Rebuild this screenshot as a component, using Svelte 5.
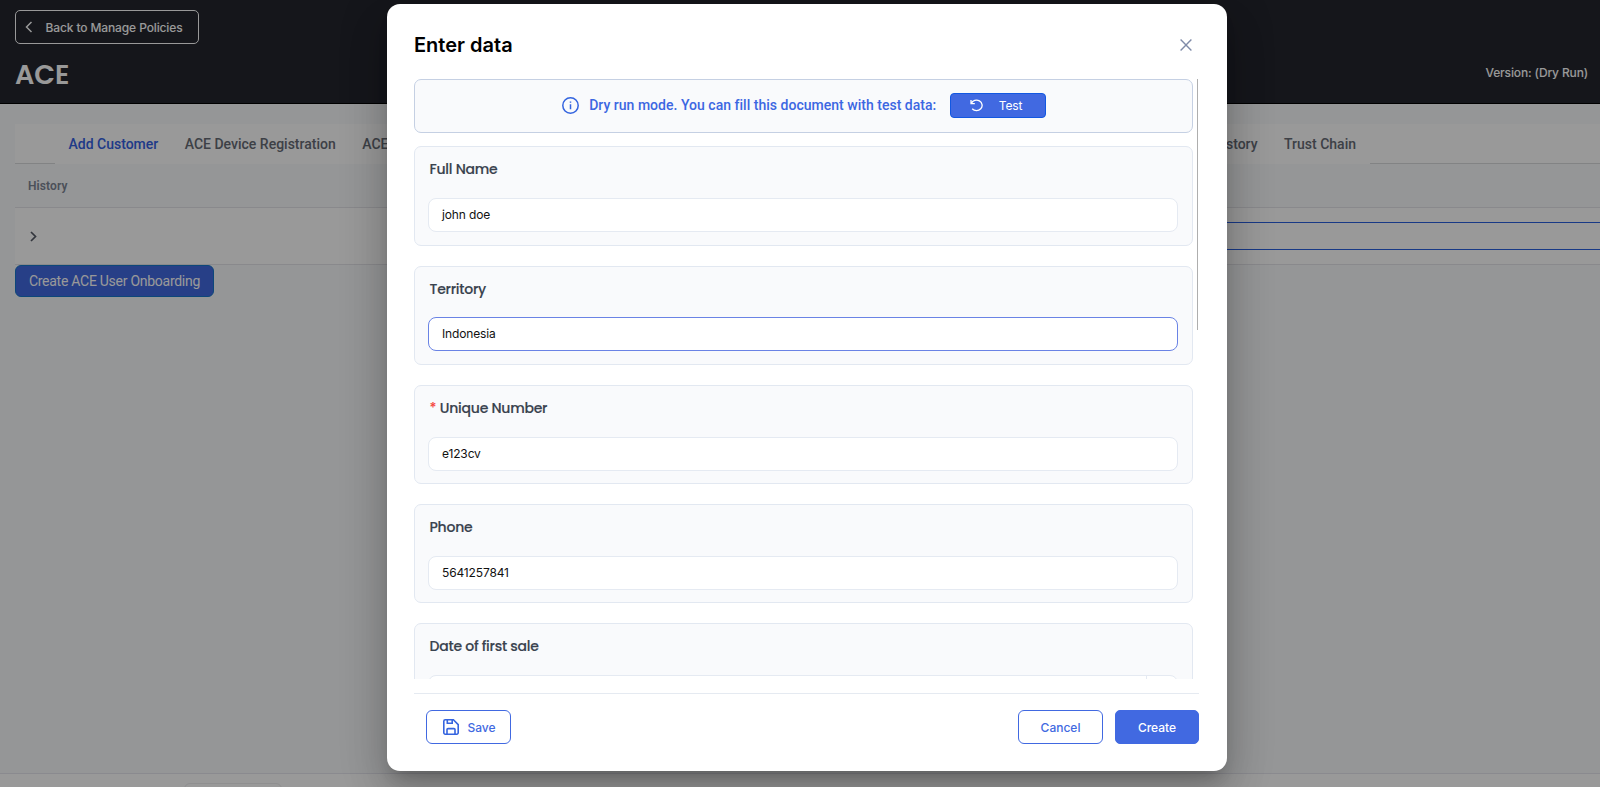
<script>
  const fields = [
    { label: 'Full Name', value: 'john doe' },
    { label: 'Territory', value: 'Indonesia', focused: true },
    { label: 'Unique Number', value: 'e123cv', required: true },
    { label: 'Phone', value: '5641257841' },
    { label: 'Date of first sale', value: '', picker: true }
  ];
</script>

<div class="screen">
  <header class="top">
    <button class="back">
      <svg width="8" height="12" viewBox="0 0 8 12"><path d="M6.5 1 1.5 6l5 5" /></svg>
      <span>Back to Manage Policies</span>
    </button>
    <div class="heading">
      <h1>ACE</h1>
      <span class="version">Version: (Dry Run)</span>
    </div>
  </header>

  <main>
    <nav class="tabs">
      <div class="edge start"></div>
      <a class="active" href="#add">Add Customer</a>
      <a href="#device">ACE Device Registration</a>
      <a href="#user">ACE</a>
      <a class="push" href="#history">History</a>
      <a href="#trust">Trust Chain</a>
      <div class="edge end"></div>
    </nav>
    <div class="thead">History</div>
    <div class="trow">
      <svg width="7" height="11" viewBox="0 0 7 11"><path d="m1 1 4.5 4.5L1 10" /></svg>
      <div class="select"></div>
    </div>
    <button class="onboard">Create ACE User Onboarding</button>
  </main>
  <footer class="pager"><div class="page-size"></div></footer>
</div>

<div class="mask">
  <section class="dialog">
    <div class="dialog-head">
      <h2>Enter data</h2>
      <svg width="12" height="12" viewBox="0 0 12 12"><path d="m.6.6 10.8 10.8M11.4.6.6 11.4" /></svg>
    </div>
    <div class="body">
      <div class="form">
        <div class="banner">
          <svg class="info" width="17" height="17" viewBox="0 0 17 17"><circle cx="8.5" cy="8.5" r="7.7" /><path d="M8.5 7.3v5M8.5 4.6v1.2" /></svg>
          <span class="notice">Dry run mode. You can fill this document with test data:</span>
          <button class="test">
            <svg width="14" height="13" viewBox="0 0 14 13"><path d="M1 1v3.7h3.8M1.3 4.5A5.6 5.2 0 1 1 2.2 9.7" /></svg>
            <span>Test</span>
          </button>
        </div>
        {#each fields as field}
          <div class="card">
            <div class="label">{#if field.required}<span class="star">*</span>{/if}{field.label}</div>
            <div class="input" class:focused={field.focused}>
              <span>{field.value}</span>
              {#if field.picker}<i></i>{/if}
            </div>
          </div>
        {/each}
      </div>
      <div class="thumb"></div>
    </div>
    <div class="actions">
      <button class="save">
        <svg width="16" height="16" viewBox="0 0 16 16"><path d="M2.2.8h8.2l4.8 4.8v8.2a1.4 1.4 0 0 1-1.4 1.4H2.2a1.4 1.4 0 0 1-1.4-1.4V2.2A1.4 1.4 0 0 1 2.2.8ZM4.3 1v3.2h4.9V1M4 15v-4.4a1 1 0 0 1 1-1h6a1 1 0 0 1 1 1V15" /></svg>
        <span>Save</span>
      </button>
      <button class="cancel">Cancel</button>
      <button class="create">Create</button>
    </div>
  </section>
</div>

<style>
  :global(body) { margin: 0; overflow: hidden; }
  * { box-sizing: border-box; }
  button { font: inherit; margin: 0; padding: 0; display: flex; align-items: center; justify-content: center; }
  svg { fill: none; flex: none; display: block; }
  .screen { width: 1600px; height: 787px; display: flex; flex-direction: column; background: #f9fafc; font-family: Roboto, sans-serif; overflow: hidden; }

  .top { height: 104px; flex: none; background: #23252e; border-bottom: 1px solid #000; padding: 10px 12px 0 15px; color: #fff; font-family: Inter, sans-serif; }
  .back { width: 184px; height: 34px; justify-content: flex-start; padding-left: 9px; gap: 12.5px; border: 1px solid #fff; border-radius: 5px; background: none; color: #fff; font-size: 12px; font-weight: 500; letter-spacing: -.12px; white-space: nowrap; }
  .back svg { stroke: #fff; stroke-width: 1.5; }
  .heading { display: flex; justify-content: space-between; align-items: center; height: 58px; }
  h1 { margin: 3px 0 0; font: 600 27px/40px Poppins, Inter, sans-serif; }
  .version { font-size: 12px; font-weight: 500; letter-spacing: -.14px; margin-top: -2px; }

  main { flex: 1; padding: 20px 0 0 15px; }
  .tabs { display: flex; height: 40px; background: #fff; }
  .tabs a { text-decoration: none; color: #666b75; font-size: 14px; font-weight: 500; line-height: 41px; margin-right: 26.5px; white-space: nowrap; }
  .tabs a.active { color: #3562e3; }
  .tabs a.push { margin-left: 797.5px; }
  .edge { border-bottom: 1px solid #d9dadd; }
  .start { width: 40px; margin-right: 13.5px; }
  .end { flex: 1; margin-left: -13px; }
  .thead { height: 44px; border-bottom: 1px solid #e4e5e9; padding: 0 13px; font-size: 12px; font-weight: 600; letter-spacing: .1px; line-height: 44px; color: #7d8594; }
  .trow { height: 57px; display: flex; align-items: center; justify-content: space-between; background: #fff; border-bottom: 1px solid #e4e5e9; padding-left: 15px; }
  .trow svg { stroke: #555b66; stroke-width: 1.7; }
  .select { width: 500px; height: 28px; border: 1px solid #2960df; border-right: 0; }
  .onboard { width: 199px; height: 32px; border: 1px solid #1677cc; border-radius: 6px; background: #4169e1; color: #fff; font-size: 14px; letter-spacing: -.27px; }
  .pager { height: 14px; flex: none; background: #fff; border-top: 1px solid #e6e6ee; padding: 9px 0 0 184px; overflow: hidden; }
  .page-size { width: 98px; height: 30px; border: 1px solid #eeeef0; border-radius: 6px; }

  .mask { position: absolute; inset: 0; background: rgba(0, 0, 0, .4); padding: 4px 0 0 387px; overflow: hidden; }
  .dialog { width: 839.5px; height: 767px; background: #fff; border-radius: 13px; padding: 0 27px; box-shadow: 0 11px 15px -7px rgba(0,0,0,.2), 0 24px 38px 3px rgba(0,0,0,.14), 0 9px 46px 8px rgba(0,0,0,.12); font-family: Inter, sans-serif; }
  .dialog-head { height: 75px; display: flex; justify-content: space-between; align-items: center; padding: 7px 8px 0 0; }
  .dialog-head svg { stroke: #7f8ba8; stroke-width: 1.4; margin-top: -1px; }
  h2 { margin: 0; font-size: 20px; font-weight: 600; color: #000; }
  .body { height: 600px; display: flex; gap: 4.8px; overflow: hidden; }
  .form { width: 778.5px; flex: none; }
  .thumb { width: 1px; height: 251px; background: #aeaeae; }
  .banner { height: 54px; display: flex; align-items: center; justify-content: center; background: #f9fafc; border: 1px solid #c5d0e3; border-radius: 7px; margin-bottom: 13.3px; padding: 0 0 2px 2px; }
  .info { stroke: #3464df; stroke-width: 1.5; margin-right: 10px; }
  .notice { font: 500 14px/20px Roboto, sans-serif; letter-spacing: .02px; color: #3c67e2; margin-right: 13.5px; }
  .test { width: 96.5px; height: 25px; border: 1px solid #1258e2; border-radius: 4px; background: #4169e1; color: #fff; font-size: 12px; letter-spacing: -.1px; gap: 15px; padding-right: 4px; }
  .test svg { stroke: #fff; stroke-width: 1.3; }
  .card { height: 99.3px; border: 1px solid #e2e8f1; border-radius: 7px; background: #f9fafc; padding: 11px 14px 0 13px; margin-bottom: 20px; }
  .label { height: 22px; margin: 0 0 17.8px 1.5px; font: 500 14px/22px Poppins, Inter, sans-serif; letter-spacing: -.24px; font-feature-settings: "cv11"; color: #39424e; -webkit-text-stroke: .15px #39424e; }
  .star { color: #f5443b; margin-right: 3.5px; -webkit-text-stroke: 0; }
  .input { display: flex; justify-content: space-between; height: 34px; border: 1px solid #e5eaf2; border-radius: 8px; background: #fff; padding: 0 13px; color: #111; font-size: 12px; letter-spacing: -.14px; line-height: 32px; }
  .input.focused { border-color: #6a83e5; }
  .input i { width: 1px; height: 32px; margin-right: 17px; background: #e5eaf2; }
  .actions { display: flex; gap: 12px; height: 51px; margin-top: 14px; padding: 16px 0 0 12px; border-top: 1px solid #e5eaf1; width: 785px; }
  .actions button { width: 85px; height: 34px; border: 1px solid #4169e1; border-radius: 6px; background: #fff; color: #4169e1; font-size: 12px; font-weight: 500; flex: none; }
  .actions .save { margin-right: auto; gap: 8.5px; padding-left: 1.5px; }
  .actions .create { background: #4169e1; color: #fff; width: 84px; border-radius: 5px; }
  .save svg { stroke: #3564df; stroke-width: 1.6; }
</style>
